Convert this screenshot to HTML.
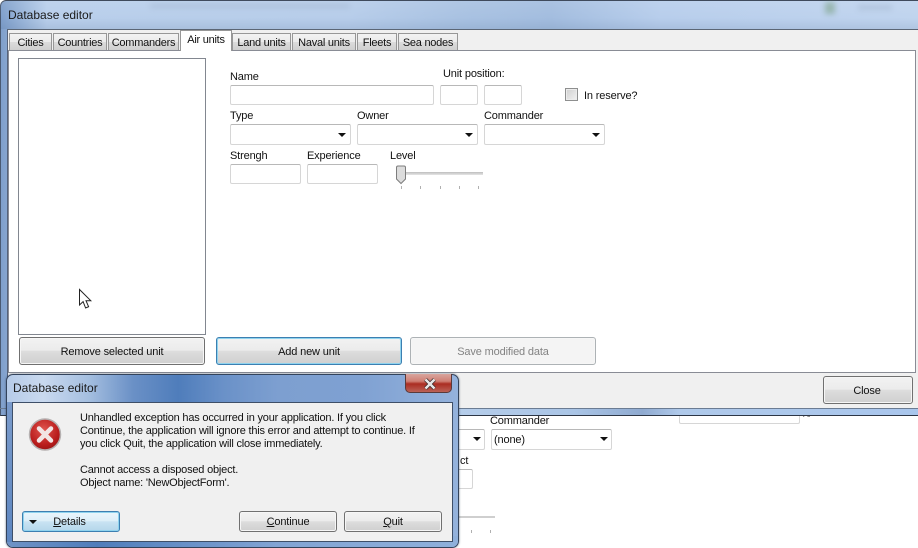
<!DOCTYPE html>
<html><head><meta charset="utf-8"><style>
html,body{margin:0;padding:0}
body{width:918px;height:548px;position:relative;overflow:hidden;background:#fff;font:11px/14px "Liberation Sans",sans-serif;color:#111}
#w{position:absolute;left:0;top:0;width:918px;height:548px;overflow:hidden;filter:blur(.25px)}
.a{position:absolute}
.t{position:absolute;white-space:nowrap;letter-spacing:-.15px;line-height:14px;margin-top:1px}
.tab{position:absolute;top:33px;height:17px;box-sizing:border-box;border:1px solid #979797;border-bottom:0;background:linear-gradient(#f2f2f2,#ebebeb 50%,#dcdcdc 50%,#cfcfcf);text-align:center;line-height:18px;letter-spacing:-.25px;white-space:nowrap}
.in{position:absolute;box-sizing:border-box;border:1px solid #d6d6d6;border-top-color:#b8b8b8;background:#fff;border-radius:2px}
.ar{position:absolute;width:0;height:0;border-left:4px solid transparent;border-right:4px solid transparent;border-top:4px solid #111}
.btn{position:absolute;box-sizing:border-box;border:1px solid #707070;border-radius:3px;background:linear-gradient(#f2f2f2,#ebebeb 48%,#dddddd 50%,#cfcfcf);box-shadow:inset 0 0 0 1px #f6f6f6;text-align:center;letter-spacing:-.15px;white-space:nowrap;padding-top:1px}
.foc{border-color:#3c7fb1;box-shadow:inset 0 0 0 1px #8fd3ee}
.tk{position:absolute;width:1px;height:3px;background:#b0b0b0}
</style></head><body><div id="w">

<!-- background window content -->
<div class="t" style="left:490px;top:413px">Commander</div>
<div class="in" style="left:491px;top:429px;width:121px;height:21px"></div>
<div class="t" style="left:494px;top:432px">(none)</div>
<div class="ar" style="left:600px;top:437px"></div>
<div class="in" style="left:400px;top:429px;width:85px;height:21px"></div>
<div class="ar" style="left:473px;top:437px"></div>
<div class="in" style="left:679px;top:410px;width:121px;height:14px"></div>
<div class="t" style="left:801px;top:406px;color:#555">%</div>
<div class="t" style="left:460px;top:453px">ct</div>
<div class="in" style="left:420px;top:469px;width:53px;height:20px"></div>
<div class="a" style="left:440px;top:516px;width:55px;height:2px;background:#cfcfcf"></div>
<div class="tk" style="left:471px;top:530px"></div>
<div class="tk" style="left:490px;top:530px"></div>

<!-- main window -->
<div class="a" style="left:0;top:0;width:918px;height:416px;box-sizing:border-box;border-top:1px solid #3f4a5c;border-bottom:1px solid #2d3645;border-left:1px solid #4a5a72;background:linear-gradient(90deg,#7f9fcb 0,#b9cfeb 5%,#b7cdea 38%,#a9c2e2 50%,#a3bddf 60%,#b8ceec 72%,#c0d4ee 100%);border-radius:6px 0 0 0"></div>
<div class="a" style="left:0;top:1px;width:918px;height:28px;background:linear-gradient(rgba(255,255,255,.08),rgba(255,255,255,0) 60%,rgba(60,90,130,.12))"></div>
<div class="a" style="left:150px;top:4px;width:200px;height:4px;background:#6d7f96;opacity:.2;filter:blur(3px)"></div>
<div class="a" style="left:825px;top:2px;width:10px;height:12px;background:#5c8a55;opacity:.4;filter:blur(3px)"></div>
<div class="a" style="left:858px;top:5px;width:34px;height:5px;background:#6d7f96;opacity:.2;filter:blur(3px)"></div>
<div class="t" style="left:8px;top:8px;margin:0;font-size:12px;letter-spacing:0;color:#1a1a1a">Database editor</div>

<div class="a" style="left:7px;top:29px;width:911px;height:379px;background:#f0f0f0;border-top:1px solid #5b6675;border-left:1px solid #55627a;box-sizing:border-box"></div>
<div class="a" style="left:0;top:408px;width:918px;height:1px;background:#6b7c93"></div>

<!-- tab panel -->
<div class="a" style="left:8px;top:50px;width:908px;height:323px;box-sizing:border-box;background:#fff;border:1px solid #898c95"></div>
<div class="tab" style="left:9px;width:43px">Cities</div>
<div class="tab" style="left:53px;width:54px">Countries</div>
<div class="tab" style="left:108px;width:71px">Commanders</div>
<div class="tab" style="left:232px;width:59px">Land units</div>
<div class="tab" style="left:292px;width:64px">Naval units</div>
<div class="tab" style="left:357px;width:40px">Fleets</div>
<div class="tab" style="left:398px;width:60px">Sea nodes</div>
<div class="tab" style="left:180px;top:30px;width:52px;height:21px;background:#fff;line-height:18px;z-index:2">Air units</div>

<div class="a" style="left:18px;top:58px;width:188px;height:277px;box-sizing:border-box;border:1px solid #828790;background:#fff"></div>

<svg class="a" style="left:78px;top:288px" width="15" height="22" viewBox="0 0 15 22"><path d="M1.500 1.500V17l3.600-3.400L7.600 20l3-1.300-2.600-6h4.800z" fill="#fff" stroke="#222" stroke-width="1"/></svg>

<div class="t" style="left:230px;top:69px">Name</div>
<div class="t" style="left:443px;top:66px">Unit position:</div>
<div class="in" style="left:230px;top:85px;width:204px;height:20px"></div>
<div class="in" style="left:440px;top:85px;width:38px;height:20px"></div>
<div class="in" style="left:484px;top:85px;width:38px;height:20px"></div>
<div class="a" style="left:565px;top:88px;width:13px;height:13px;box-sizing:border-box;border:1px solid #8e8f8f;background:linear-gradient(135deg,#cfcfcf,#f2f2f2);box-shadow:inset 0 0 0 1px #ececec"></div>
<div class="t" style="left:584px;top:88px">In reserve?</div>

<div class="t" style="left:230px;top:108px">Type</div>
<div class="t" style="left:357px;top:108px">Owner</div>
<div class="t" style="left:484px;top:108px">Commander</div>
<div class="in" style="left:230px;top:124px;width:121px;height:21px"></div>
<div class="in" style="left:357px;top:124px;width:121px;height:21px"></div>
<div class="in" style="left:484px;top:124px;width:121px;height:21px"></div>
<div class="ar" style="left:338px;top:133px"></div>
<div class="ar" style="left:465px;top:133px"></div>
<div class="ar" style="left:592px;top:133px"></div>

<div class="t" style="left:230px;top:148px">Strengh</div>
<div class="t" style="left:307px;top:148px">Experience</div>
<div class="t" style="left:390px;top:148px">Level</div>
<div class="in" style="left:230px;top:164px;width:71px;height:20px"></div>
<div class="in" style="left:307px;top:164px;width:71px;height:20px"></div>
<div class="a" style="left:398px;top:172px;width:85px;height:3px;background:linear-gradient(#bdbdbd,#e6e6e6)"></div>
<svg class="a" style="left:395px;top:165px" width="12" height="20" viewBox="0 0 12 20"><path d="M1.500 2.500q0-1.500 1.500-1.500h6q1.500 0 1.500 1.500V14l-4.500 4.500L1.500 14z" fill="#dcdcdc" stroke="#7d7d7d"/></svg>
<div class="tk" style="left:401px;top:186px"></div>
<div class="tk" style="left:420px;top:186px"></div>
<div class="tk" style="left:440px;top:186px"></div>
<div class="tk" style="left:459px;top:186px"></div>
<div class="tk" style="left:478px;top:186px"></div>

<div class="btn" style="left:19px;top:337px;width:186px;height:28px;line-height:26px">Remove selected unit</div>
<div class="btn foc" style="left:216px;top:337px;width:186px;height:28px;line-height:26px">Add new unit</div>
<div class="btn" style="left:410px;top:337px;width:186px;height:28px;line-height:26px;background:#f4f4f4;border-color:#adb2b5;color:#838383">Save modified data</div>
<div class="btn" style="left:823px;top:376px;width:90px;height:28px;line-height:26px"><span style="margin-left:-2px">Close</span></div>

<!-- bottom blue band -->
<div class="a" style="left:459px;top:409px;width:459px;height:6px;background:linear-gradient(90deg,#b5cdea,#aac5e6 25%,#8faad0 40%,#afc9ea 48%,#a9c6ec)"></div>
<div class="a" style="left:459px;top:415px;width:459px;height:1px;background:#2d3645"></div>

<!-- dialog -->
<div class="a" style="left:6px;top:374px;width:453px;height:174px;box-sizing:border-box;border:1px solid #33435b;border-radius:7px;background:linear-gradient(90deg,#b6cbe8 0,#c9d9ef 8%,#a5bfe0 18%,#6a90c6 28%,#4f7dbb 38%,#6a91c8 48%,#7d9fd0 60%,#7fa1d2 78%,#94b2dc 100%);box-shadow:0 0 2px rgba(20,40,70,.6)"></div>
<div class="a" style="left:7px;top:536px;width:451px;height:11px;border-radius:0 0 6px 6px;background:linear-gradient(90deg,#6f93c6,#4f7dbb 20%,#82a4d4 60%,#8fb0db)"></div>
<div class="a" style="left:7px;top:402px;width:5px;height:140px;background:linear-gradient(#7a9bcb,#5d86c0)"></div>
<div class="t" style="left:13px;top:381px;margin:0;font-size:12px;letter-spacing:0;color:#1a1a1a">Database editor</div>
<div class="a" style="left:12px;top:402px;width:441px;height:140px;box-sizing:border-box;background:#f0f0f0;border:1px solid #3e4f68"></div>

<div class="a" style="left:405px;top:374px;width:47px;height:19px;box-sizing:border-box;border:1px solid #5a3a3a;border-top:0;border-radius:0 0 5px 5px;background:linear-gradient(#d8a59e,#cf7f74 40%,#ab2d22 55%,#bb6257)"></div>
<svg class="a" style="left:423px;top:378px" width="14" height="12" viewBox="0 0 14 12"><path d="M2.500 1.500L11.500 10.500M11.500 1.500L2.500 10.500" stroke="#3a2a2a" stroke-width="4"/><path d="M2.500 1.500L11.500 10.500M11.500 1.500L2.500 10.500" stroke="#e8e8e8" stroke-width="2.500"/></svg>

<svg class="a" style="left:28px;top:418px" width="34" height="34" viewBox="0 0 34 34"><defs><radialGradient id="r" cx=".45" cy=".35" r=".75"><stop offset="0" stop-color="#e0564f"/><stop offset=".65" stop-color="#b91c1c"/><stop offset="1" stop-color="#8c1212"/></radialGradient></defs><circle cx="17" cy="16.500" r="15.500" fill="url(#r)" stroke="#b5b0b0" stroke-width="1.500"/><path d="M11 10.500L23 22.500M23 10.500L11 22.500" stroke="#f2e4e4" stroke-width="4.500" stroke-linecap="round"/></svg>

<div class="t" style="left:80px;top:411px;line-height:13px;letter-spacing:-.2px">Unhandled exception has occurred in your application. If you click<br>Continue, the application will ignore this error and attempt to continue. If<br>you click Quit, the application will close immediately.<br><br>Cannot access a disposed object.<br>Object name: 'NewObjectForm'.</div>

<div class="btn foc" style="left:22px;top:511px;width:98px;height:21px;line-height:18px;background:linear-gradient(#eaf6fc,#dceef8 48%,#c9e3f3 50%,#b5d6ea)"><span style="margin-left:-3px"><u>D</u>etails</span></div>
<div class="ar" style="left:29px;top:520px"></div>
<div class="btn" style="left:239px;top:511px;width:98px;height:21px;line-height:18px"><u>C</u>ontinue</div>
<div class="btn" style="left:344px;top:511px;width:98px;height:21px;line-height:18px"><u>Q</u>uit</div>
</div></body></html>
